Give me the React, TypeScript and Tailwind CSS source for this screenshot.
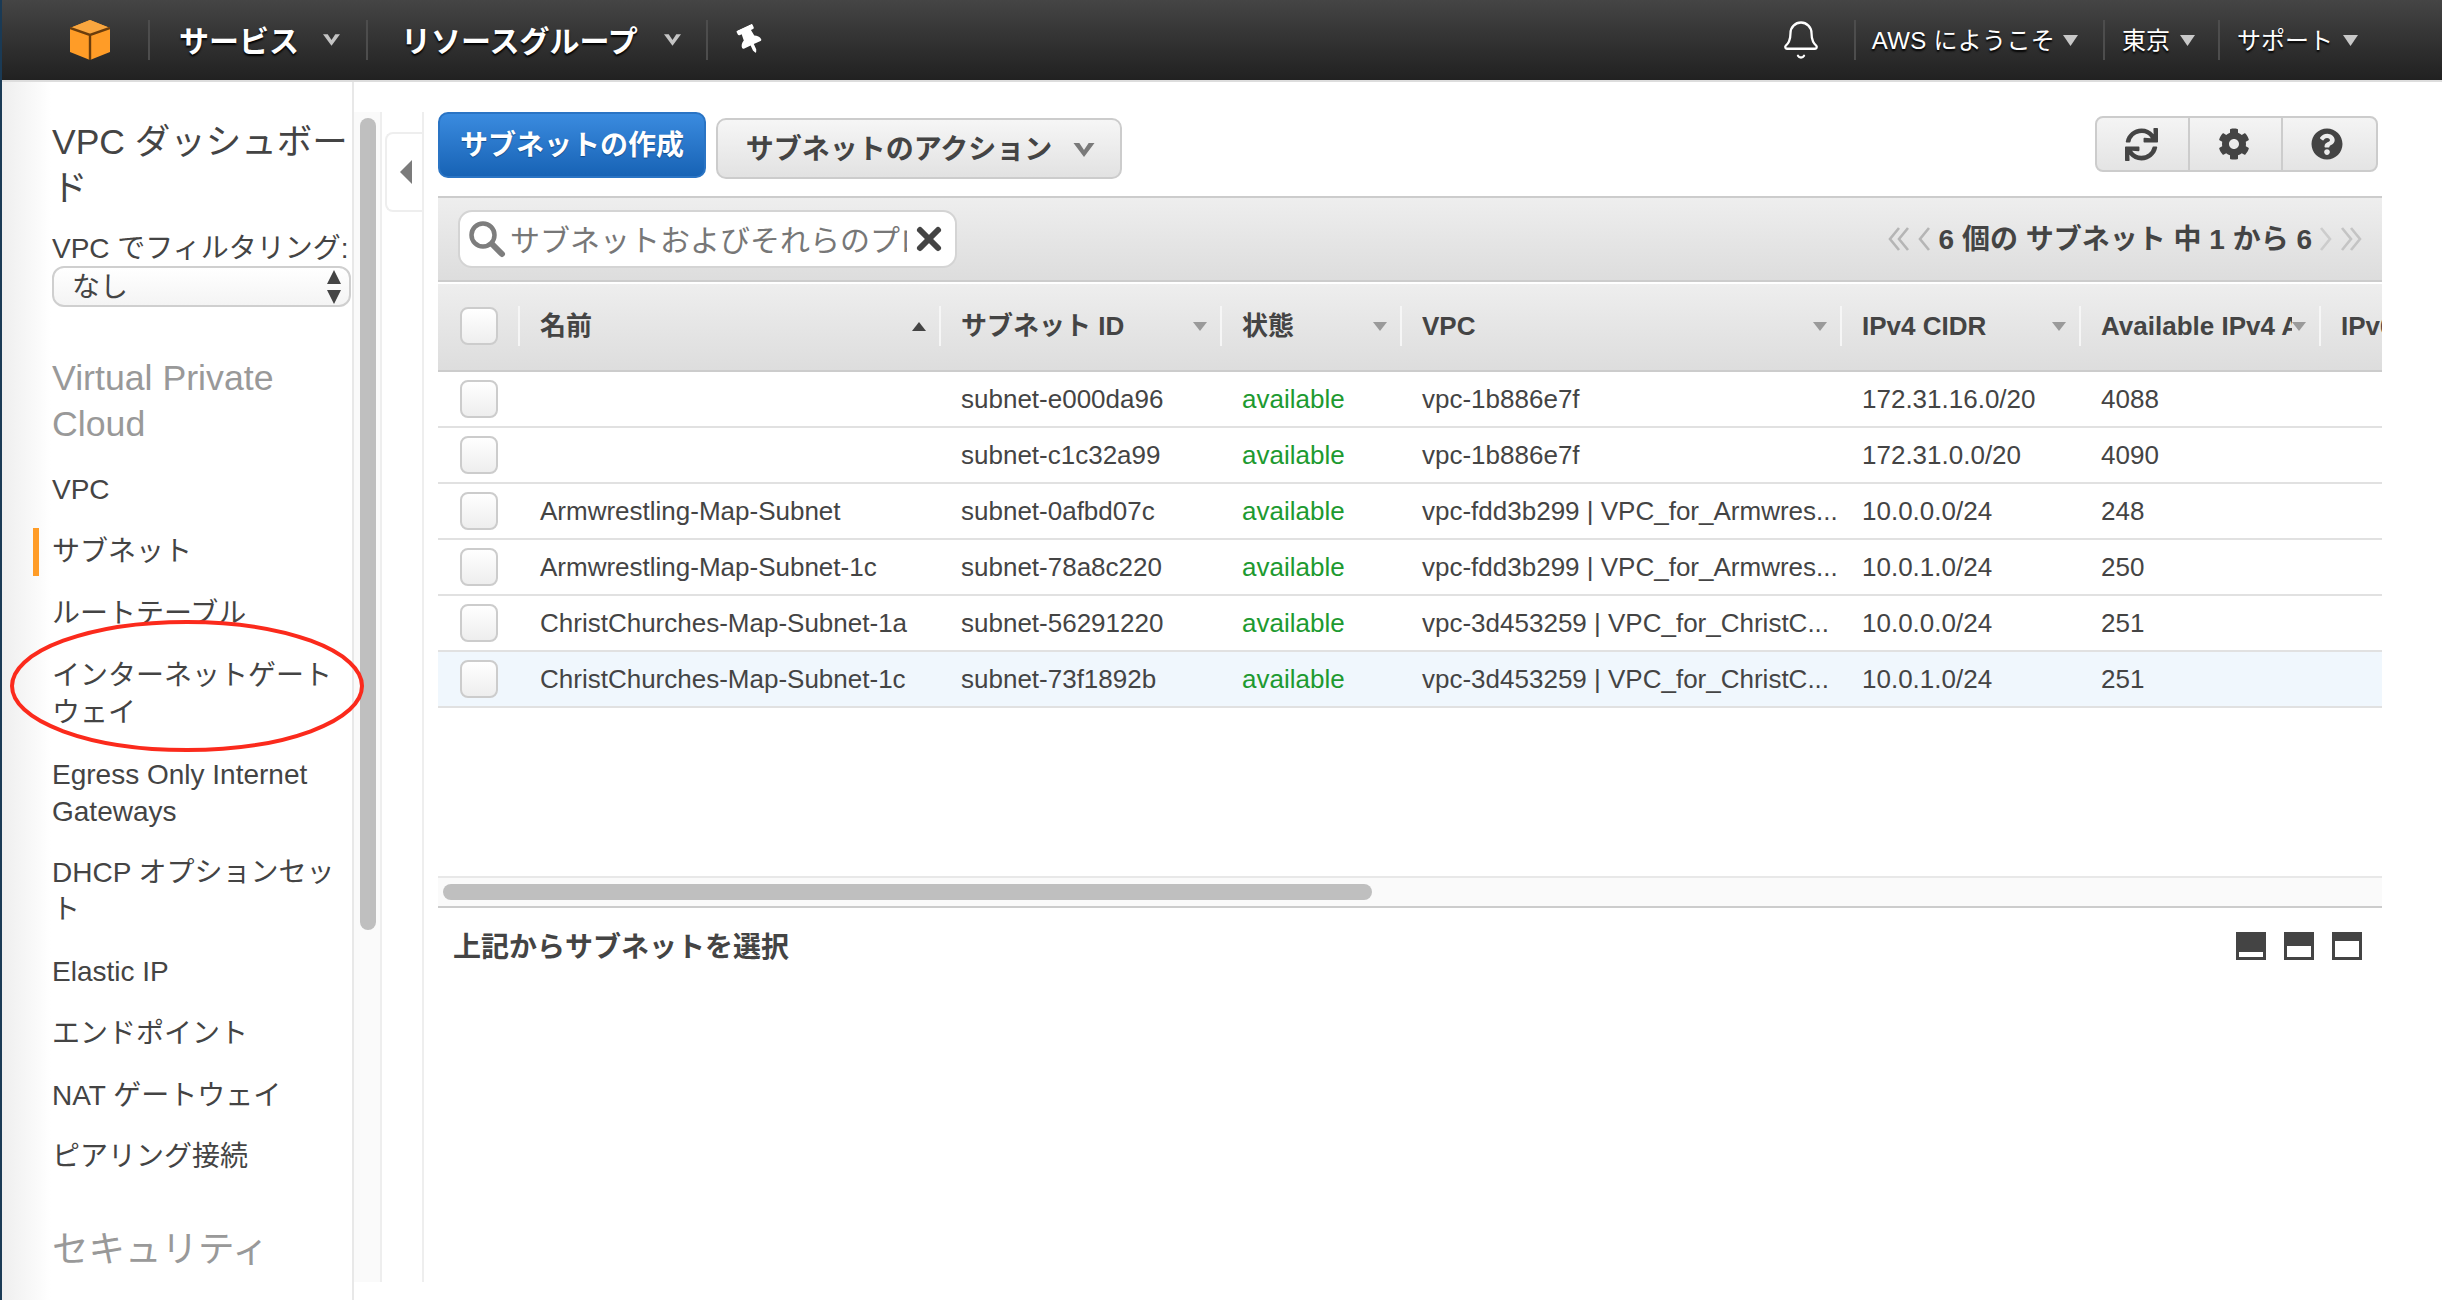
import { Bell, X } from "lucide-react";
import { FaCog, FaQuestionCircle, FaSync, FaThumbtack } from "react-icons/fa";

const fontStack = "[font-family:'Liberation_Sans','Noto_Sans_CJK_JP',sans-serif]";

const columns = [
  { label: "名前", sort: "up" },
  { label: "サブネット ID", sort: "down" },
  { label: "状態", sort: "down" },
  { label: "VPC", sort: "down" },
  { label: "IPv4 CIDR", sort: "down" },
  { label: "Available IPv4 Addresses", sort: "down" },
  { label: "IPv6 CIDR", sort: "" },
];

const subnets = [
  { name: "", id: "subnet-e000da96", vpc: "vpc-1b886e7f", cidr: "172.31.16.0/20", free: "4088" },
  { name: "", id: "subnet-c1c32a99", vpc: "vpc-1b886e7f", cidr: "172.31.0.0/20", free: "4090" },
  { name: "Armwrestling-Map-Subnet", id: "subnet-0afbd07c", vpc: "vpc-fdd3b299 | VPC_for_Armwres...", cidr: "10.0.0.0/24", free: "248" },
  { name: "Armwrestling-Map-Subnet-1c", id: "subnet-78a8c220", vpc: "vpc-fdd3b299 | VPC_for_Armwres...", cidr: "10.0.1.0/24", free: "250" },
  { name: "ChristChurches-Map-Subnet-1a", id: "subnet-56291220", vpc: "vpc-3d453259 | VPC_for_ChristC...", cidr: "10.0.0.0/24", free: "251" },
  { name: "ChristChurches-Map-Subnet-1c", id: "subnet-73f1892b", vpc: "vpc-3d453259 | VPC_for_ChristC...", cidr: "10.0.1.0/24", free: "251", selected: true },
];

const navItems = [
  { label: ["VPC"] },
  { label: ["サブネット"], active: true },
  { label: ["ルートテーブル"] },
  { label: ["インターネットゲート", "ウェイ"] },
  { label: ["Egress Only Internet", "Gateways"] },
  { label: ["DHCP オプションセッ", "ト"] },
  { label: ["Elastic IP"] },
  { label: ["エンドポイント"] },
  { label: ["NAT ゲートウェイ"] },
  { label: ["ピアリング接続"] },
];

const gridCols = "grid grid-cols-[80px_421px_281px_180px_440px_239px_240px_63px]";

function Logo() {
  return (
    <svg width="40" height="40" viewBox="0 0 40 40" className="shrink-0">
      <path d="M20 0 L40 8 V32 L20 40 L0 32 V8 Z" fill="#ff9c27" />
      <path d="M20 0 L40 8 L20 15 L0 8 Z" fill="#f9a63f" />
      <path d="M0 8 L20 15 L40 8 M20 15 V40" fill="none" stroke="#6b3d0c" strokeWidth="2.4" />
    </svg>
  );
}

function NavCaret({ large }: { large?: boolean }) {
  if (large) {
    return (
      <svg width="17" height="12" viewBox="0 0 18 12" className="shrink-0">
        <path d="M0 0 L5 0 L9 6 L13 0 L18 0 L9 12 Z" fill="#c4c4c4" />
      </svg>
    );
  }
  return (
    <svg width="15" height="11" viewBox="0 0 15 11" className="shrink-0">
      <path d="M0 0 L15 0 L7.5 11 Z" fill="#c8c8c8" />
    </svg>
  );
}

function NavDivider() {
  return <div className="w-[2px] h-[40px] shrink-0 bg-[#4d4d4d]" />;
}

function TopNav() {
  return (
    <header className="h-[82px] shrink-0 flex items-center justify-between bg-gradient-to-b from-[#454545] to-[#212121] border-b-2 border-[#dddddd] pl-[68px] pr-[84px] text-white [text-shadow:0_2px_2px_#000]">
      <div className="flex items-center">
        <Logo />
        <div className="ml-[38px]"><NavDivider /></div>
        <span className="ml-[29px] pt-[3px] text-[30px] font-bold leading-none">サービス</span>
        <span className="ml-[24px] mr-[26px]"><NavCaret large /></span>
        <NavDivider />
        <span className="ml-[33px] pt-[3px] text-[30px] font-bold leading-none">リソースグループ</span>
        <span className="ml-[26px] mr-[25px]"><NavCaret large /></span>
        <NavDivider />
        <FaThumbtack className="ml-[30px] w-[24px] h-[28px] -rotate-[25deg] text-white" />
      </div>
      <div className="flex items-center text-[24px]">
        <Bell className="w-[42px] h-[42px] mr-[32px]" strokeWidth={1.3} />
        <NavDivider />
        <span className="ml-[16px] mr-[8px] pt-[2px] tracking-[0.3px]">AWS にようこそ</span>
        <NavCaret />
        <span className="ml-[25px]"><NavDivider /></span>
        <span className="ml-[17px] mr-[10px] pt-[2px]">東京</span>
        <NavCaret />
        <span className="ml-[23px]"><NavDivider /></span>
        <span className="ml-[17px] mr-[10px] pt-[2px]">サポート</span>
        <NavCaret />
      </div>
    </header>
  );
}

function Sidebar() {
  return (
    <aside className="relative w-[352px] shrink-0 overflow-hidden bg-gradient-to-r from-[#eeeeee] via-white via-[14%] to-white border-r-2 border-[#e8e8e8] pl-[50px] pt-[37px] text-[#444444] whitespace-nowrap">
      <h1 className="text-[35.5px] leading-[46px]">
        VPC ダッシュボー<br />ド
      </h1>
      <div className="mt-[20px] text-[28px] leading-[35px]">VPC でフィルタリング:</div>
      <div className="w-[299px] h-[41px] flex items-center justify-between rounded-[12px] border-2 border-[#cfcfcf] bg-gradient-to-b from-white to-[#f4f4f4] pl-[18px] pr-[8px] text-[28px]">
        <span className="pt-[3px]">なし</span>
        <svg width="14" height="34" viewBox="0 0 14 34">
          <path d="M7 0 L14 14 H0 Z M7 34 L0 20 H14 Z" fill="#444444" />
        </svg>
      </div>
      <h2 className="mt-[48px] text-[35.7px] leading-[46px] text-[#999999]">
        Virtual Private<br />Cloud
      </h2>
      <nav className="mt-[12px] -ml-[19px] text-[28px] leading-[37px]">
        {navItems.map((item, index) => (
          <div key={index} className="flex py-[12.4px] relative">
            <div className={item.active ? "absolute left-0 top-[7px] w-[6px] h-[48px] bg-[#ff9c27]" : "hidden"} />
            <div className="ml-[19px]">
              {item.label.map((line, lineIndex) => (
                <div key={lineIndex}>{line}</div>
              ))}
            </div>
          </div>
        ))}
      </nav>
      <h2 className="mt-[39px] text-[36.5px] leading-[46px] text-[#999999]">セキュリティ</h2>
    </aside>
  );
}

function SideScrollbar() {
  return (
    <div className="w-[28px] h-[1170px] shrink-0 mt-[30px] bg-[#fafafa] border-r-2 border-[#eeeeee] pl-[6px] pt-[6px]">
      <div className="w-[16px] h-[812px] rounded-full bg-[#bfbfbf]" />
    </div>
  );
}

function CollapseStrip() {
  return (
    <div className="w-[42px] h-[1170px] shrink-0 mt-[30px] border-r-2 border-[#eeeeee] pt-[20px] pl-[3px]">
      <div className="w-[37px] h-[80px] flex items-center justify-center rounded-l-[8px] border-2 border-r-0 border-[#eeeeee] pl-[3px]">
        <svg width="12" height="24" viewBox="0 0 12 24">
          <path d="M12 0 V24 L0 12 Z" fill="#7b7b7b" />
        </svg>
      </div>
    </div>
  );
}

function SortArrow({ dir }: { dir: string }) {
  if (dir === "up") {
    return (
      <svg width="14" height="9" viewBox="0 0 14 9" className="shrink-0">
        <path d="M7 0 L14 9 H0 Z" fill="#444444" />
      </svg>
    );
  }
  return (
    <svg width="14" height="9" viewBox="0 0 14 9" className="shrink-0">
      <path d="M0 0 H14 L7 9 Z" fill="#9a9a9a" />
    </svg>
  );
}

function Checkbox() {
  return (
    <div className="w-[38px] h-[38px] rounded-[8px] border-2 border-[#cccccc] bg-gradient-to-b from-white to-[#eeeeee]" />
  );
}

function PaneIcon({ y }: { y: number }) {
  return (
    <svg width="30" height="28" viewBox="0 0 30 28">
      <rect width="30" height="28" fill="#444444" />
      <rect x="3" y={y} width="24" height={25 - y} fill="#ffffff" />
    </svg>
  );
}

function PageArrows({ dir, double, color }: { dir: "left" | "right"; double?: boolean; color: string }) {
  const flip = dir === "right" ? "-scale-x-100" : "";
  if (double) {
    return (
      <svg width="22" height="24" viewBox="0 0 22 24" className={`shrink-0 ${flip}`}>
        <path d="M11 1 L2 12 L11 23 M20 1 L11 12 L20 23" fill="none" stroke={color} strokeWidth="2.6" />
      </svg>
    );
  }
  return (
    <svg width="12" height="24" viewBox="0 0 12 24" className={`shrink-0 ${flip}`}>
      <path d="M11 1 L2 12 L11 23" fill="none" stroke={color} strokeWidth="2.6" />
    </svg>
  );
}

function SubnetTable() {
  return (
    <div className="w-[1944px] overflow-hidden">
      <div className={`${gridCols} h-[88px] mt-[2px] pb-[2px] items-center bg-gradient-to-b from-[#eeeeee] to-[#dddddd] border-b-2 border-[#cccccc] text-[26px] font-bold text-[#444444]`}>
        <div className="pl-[22px]"><Checkbox /></div>
        {columns.map((col) => (
          <div key={col.label} className={`flex items-center h-[40px] border-l-2 border-[#f6f6f6] pl-[20px] whitespace-nowrap ${col.sort ? "pr-[13px]" : ""}`}>
            <span className="flex-1 overflow-hidden">{col.label}</span>
            {col.sort && <SortArrow dir={col.sort} />}
          </div>
        ))}
      </div>
      {subnets.map((row) => (
        <div key={row.id} className={`${gridCols} h-[56px] items-center border-b-2 border-[#e1e1e1] text-[26px] text-[#444444] whitespace-nowrap ${row.selected ? "bg-[#f0f7fd]" : "bg-white"}`}>
          <div className="pl-[22px]"><Checkbox /></div>
          <div className="pl-[22px]">{row.name}</div>
          <div className="pl-[22px]">{row.id}</div>
          <div className="pl-[22px] text-[#1d9a30]">available</div>
          <div className="pl-[22px]">{row.vpc}</div>
          <div className="pl-[22px]">{row.cidr}</div>
          <div className="pl-[22px]">{row.free}</div>
          <div />
        </div>
      ))}
    </div>
  );
}

function MainPanel() {
  return (
    <main className="flex-1 pl-[14px] pt-[30px] min-w-0">
      <div className="w-[1944px] flex items-start">
        <button className="h-[66px] w-[268px] pt-[2px] rounded-[10px] border-2 border-[#2a74c4] bg-gradient-to-b from-[#3a8bdf] to-[#1763b5] text-[28px] font-bold text-white [text-shadow:0_1px_1px_#114a88]">
          サブネットの作成
        </button>
        <button className="ml-[10px] mt-[6px] h-[61px] w-[406px] pt-[2px] pl-[3px] flex items-center justify-center gap-[21px] rounded-[10px] border-2 border-[#cccccc] bg-gradient-to-b from-[#f6f6f6] to-[#e2e2e2] text-[28px] font-bold text-[#444444]">
          サブネットのアクション
          <svg width="22" height="14" viewBox="0 0 18 12">
            <path d="M0 0 L5 0 L9 6 L13 0 L18 0 L9 12 Z" fill="#7a7a7a" />
          </svg>
        </button>
        <div className="ml-auto mr-[4px] mt-[4px] h-[56px] w-[283px] flex rounded-[8px] border-2 border-[#cccccc] bg-gradient-to-b from-[#f4f4f4] to-[#e4e4e4] text-[#444444]">
          <div className="flex-1 flex items-center justify-center pr-[3px] border-r-2 border-[#cccccc]"><FaSync className="w-[33px] h-[33px]" /></div>
          <div className="flex-1 flex items-center justify-center pr-[3px] border-r-2 border-[#cccccc]"><FaCog className="w-[32px] h-[32px]" /></div>
          <div className="flex-1 flex items-center justify-center pr-[5px]"><FaQuestionCircle className="w-[32px] h-[32px]" /></div>
        </div>
      </div>

      <div className="w-[1944px] h-[86px] mt-[17px] flex items-center justify-between border-y-2 border-[#cccccc] bg-gradient-to-b from-[#eeeeee] to-[#dddddd] pl-[20px] pr-[20px]">
        <div className="w-[499px] h-[58px] flex items-center rounded-[14px] border-2 border-[#d4d4d4] bg-white pl-[8px]">
          <svg width="38" height="38" viewBox="0 0 38 38" className="shrink-0">
            <circle cx="15" cy="15" r="11.5" fill="none" stroke="#7d7d7d" strokeWidth="4.5" />
            <path d="M24 24 L34 34" stroke="#7d7d7d" strokeWidth="6" strokeLinecap="round" />
          </svg>
          <span className="ml-[4px] pt-[2px] w-[397px] overflow-hidden whitespace-nowrap text-[30px] text-[#777777]">
            サブネットおよびそれらのプロパティ
          </span>
          <X className="ml-[4px] w-[36px] h-[36px] text-[#444444]" strokeWidth={4} />
        </div>
        <div className="flex items-center text-[28px] font-bold text-[#444444] whitespace-nowrap">
          <PageArrows dir="left" double color="#b5b5b5" />
          <span className="ml-[8px]"><PageArrows dir="left" color="#b5b5b5" /></span>
          <span className="ml-[9px] mr-[8px] pt-[2px]">6 個の サブネット 中 1 から 6</span>
          <PageArrows dir="right" color="#cccccc" />
          <span className="ml-[8px]"><PageArrows dir="right" double color="#c4c4c4" /></span>
        </div>
      </div>

      <SubnetTable />

      <div className="w-[1944px] h-[32px] mt-[168px] border-t-2 border-b-2 border-t-[#e8e8e8] border-b-[#cccccc] bg-[#fafafa] pl-[5px] pt-[6px]">
        <div className="w-[929px] h-[16px] rounded-full bg-[#bfbfbf]" />
      </div>

      <div className="w-[1944px] flex items-center justify-between pl-[15px] pr-[20px] pt-[24px]">
        <span className="text-[28px] leading-[32px] font-bold text-[#444444]">上記からサブネットを選択</span>
        <div className="flex gap-[18px] mb-[4px]">
          <PaneIcon y={20} />
          <PaneIcon y={14} />
          <PaneIcon y={9} />
        </div>
      </div>
    </main>
  );
}

export default function App() {
  return (
    <div className={`relative h-screen w-full overflow-hidden bg-white flex flex-col border-l-2 border-[#1a3a55] ${fontStack}`}>
      <TopNav />
      <div className="flex flex-1 min-h-0">
        <Sidebar />
        <SideScrollbar />
        <CollapseStrip />
        <MainPanel />
      </div>
      {/* hand drawn marker over the sidebar */}
      <svg width="360" height="140" viewBox="0 0 360 140" className="absolute left-[6px] top-[616px] pointer-events-none">
        <ellipse cx="179" cy="70" rx="175" ry="64" fill="none" stroke="#fb2a1c" strokeWidth="4" />
      </svg>
    </div>
  );
}
